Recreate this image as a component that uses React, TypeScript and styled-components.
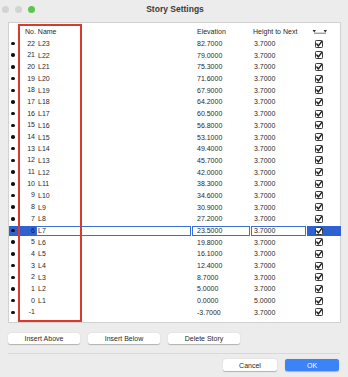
import styled, { createGlobalStyle } from "styled-components";

const GlobalStyle = createGlobalStyle`
  html, body {
    margin: 0;
    padding: 0;
    background: #ececec;
  }
  body {
    font-family: "Liberation Sans", Arial, sans-serif;
    color: #222;
  }
`;

type Story = { no: string; name: string; elevation: string; height: string };

const stories: Story[] = [
  { no: "22", name: "L23", elevation: "82.7000", height: "3.7000" },
  { no: "21", name: "L22", elevation: "79.0000", height: "3.7000" },
  { no: "20", name: "L21", elevation: "75.3000", height: "3.7000" },
  { no: "19", name: "L20", elevation: "71.6000", height: "3.7000" },
  { no: "18", name: "L19", elevation: "67.9000", height: "3.7000" },
  { no: "17", name: "L18", elevation: "64.2000", height: "3.7000" },
  { no: "16", name: "L17", elevation: "60.5000", height: "3.7000" },
  { no: "15", name: "L16", elevation: "56.8000", height: "3.7000" },
  { no: "14", name: "L15", elevation: "53.1000", height: "3.7000" },
  { no: "13", name: "L14", elevation: "49.4000", height: "3.7000" },
  { no: "12", name: "L13", elevation: "45.7000", height: "3.7000" },
  { no: "11", name: "L12", elevation: "42.0000", height: "3.7000" },
  { no: "10", name: "L11", elevation: "38.3000", height: "3.7000" },
  { no: "9", name: "L10", elevation: "34.6000", height: "3.7000" },
  { no: "8", name: "L9", elevation: "30.9000", height: "3.7000" },
  { no: "7", name: "L8", elevation: "27.2000", height: "3.7000" },
  { no: "6", name: "L7", elevation: "23.5000", height: "3.7000" },
  { no: "5", name: "L6", elevation: "19.8000", height: "3.7000" },
  { no: "4", name: "L5", elevation: "16.1000", height: "3.7000" },
  { no: "3", name: "L4", elevation: "12.4000", height: "3.7000" },
  { no: "2", name: "L3", elevation: "8.7000", height: "3.7000" },
  { no: "1", name: "L2", elevation: "5.0000", height: "3.7000" },
  { no: "0", name: "L1", elevation: "0.0000", height: "5.0000" },
  { no: "-1", name: "", elevation: "-3.7000", height: "3.7000" },
];

const SELECTED = "6";

export default function App() {
  return (
    <Window>
      <GlobalStyle />
      <TitleBar>
        <Lights>
          <Light $color="#d3d3d3" />
          <Light $color="#d3d3d3" />
          <Light $color="#5ec451" />
        </Lights>
        <Title>Story Settings</Title>
        <span />
      </TitleBar>
      <Body>
        <Table>
          <HeaderRow>
            <span />
            <HeadCell $span={2} $pad={5}>
              No. Name
            </HeadCell>
            <HeadCell $pad={5}>Elevation</HeadCell>
            <HeadCell $pad={2}>Height to Next</HeadCell>
            <HeadCell $pad={5}>
              <SortIcon />
            </HeadCell>
          </HeaderRow>
          {stories.map((s) => {
            const sel = s.no === SELECTED;
            return (
              <Row key={s.no}>
                <DotCell $sel={sel}>
                  <Dot />
                </DotCell>
                <NoCell $sel={sel}>{s.no}</NoCell>
                {sel ? (
                  <>
                    <Field $pad={1}>{s.name}</Field>
                    <Field $pad={4}>{s.elevation}</Field>
                    <Field $pad={2}>{s.height}</Field>
                  </>
                ) : (
                  <>
                    <Cell $pad={2}>{s.name}</Cell>
                    <Cell $pad={5}>{s.elevation}</Cell>
                    <Cell $pad={3}>{s.height}</Cell>
                  </>
                )}
                <CheckCell $sel={sel}>
                  <CheckBox />
                </CheckCell>
              </Row>
            );
          })}
          <Marker />
        </Table>
        <ButtonRow>
          <Button>Insert Above</Button>
          <Button>Insert Below</Button>
          <Button>Delete Story</Button>
        </ButtonRow>
        <Divider />
        <FooterRow>
          <Button>Cancel</Button>
          <Button $primary>OK</Button>
        </FooterRow>
      </Body>
    </Window>
  );
}

function CheckBox() {
  return (
    <svg width="8" height="8" viewBox="0 0 8 8">
      <rect x="0.5" y="0.5" width="7" height="7" rx="0.8" fill="#fff" stroke="#3a3a3a" strokeWidth="1" />
      <path d="M1.8 4.1 L3.4 5.9 L6.6 1.6" fill="none" stroke="#1f1f1f" strokeWidth="1.5" strokeLinecap="round" strokeLinejoin="round" />
    </svg>
  );
}

function SortIcon() {
  return (
    <svg width="16" height="5" viewBox="0 0 16 5">
      <path d="M0.5 1 L4 1 L2.25 3.6 Z" fill="#333" />
      <path d="M11.5 1 L15 1 L13.25 3.6 Z" fill="#333" />
      <path d="M2 4.2 H14" stroke="#555" strokeWidth="0.8" />
    </svg>
  );
}

const Window = styled.div`
  width: 348px;
  height: 377px;
  display: flex;
  flex-direction: column;
  background: #ececec;
  overflow: hidden;
`;

const TitleBar = styled.div`
  height: 18px;
  display: grid;
  grid-template-columns: 1fr auto 1fr;
  align-items: center;
  padding: 0 0 0 2px;
`;

const Lights = styled.div`
  display: flex;
  gap: 6px;
  align-items: center;
`;

const Light = styled.span<{ $color: string }>`
  width: 7px;
  height: 7px;
  border-radius: 50%;
  background: ${(p) => p.$color};
`;

const Title = styled.div`
  font-size: 8.5px;
  font-weight: bold;
  color: #3a3a3a;
`;

const Body = styled.div`
  padding: 4px 7px 0 8px;
  display: flex;
  flex-direction: column;
`;

const Table = styled.div`
  position: relative;
  height: 301px;
  box-sizing: border-box;
  background: #fff;
  border: 1px solid #d2d2d2;
  padding-top: 3px;
`;

const columns = "11px 16px 156px 59px 56px 1fr";

const HeaderRow = styled.div`
  display: grid;
  grid-template-columns: ${columns};
  height: 11.7px;
  align-items: center;
  font-size: 7px;
  color: #2a2a2a;
`;

const HeadCell = styled.div<{ $span?: number; $pad: number }>`
  grid-column: span ${(p) => p.$span ?? 1};
  padding-left: ${(p) => p.$pad}px;
  display: flex;
  align-items: center;
  white-space: nowrap;
`;

const Row = styled.div`
  display: grid;
  grid-template-columns: ${columns};
  height: 11.7px;
  align-items: center;
  font-size: 7px;
  color: #2a2a2a;
`;

const DotCell = styled.div<{ $sel: boolean }>`
  height: 10px;
  display: flex;
  align-items: center;
  padding-left: 2px;
  background: ${(p) => (p.$sel ? "#2e62d3" : "transparent")};
`;

const Dot = styled.span`
  width: 3.5px;
  height: 3.5px;
  border-radius: 50%;
  background: #111;
`;

const NoCell = styled.div<{ $sel: boolean }>`
  height: 10px;
  line-height: 10px;
  text-align: right;
  padding-right: 1px;
  background: ${(p) => (p.$sel ? "#2e62d3" : "transparent")};
  color: ${(p) => (p.$sel ? "#10204a" : "inherit")};
`;

const Cell = styled.div<{ $pad: number }>`
  padding-left: ${(p) => p.$pad}px;
  white-space: nowrap;
`;

const Field = styled.div<{ $pad: number }>`
  height: 10px;
  box-sizing: border-box;
  line-height: 8px;
  padding-left: ${(p) => p.$pad}px;
  border: 1px solid #3a6ed8;
  margin-right: 1px;
  background: #fff;
  white-space: nowrap;
`;

const CheckCell = styled.div<{ $sel: boolean }>`
  height: 10px;
  display: flex;
  align-items: center;
  padding-left: 8px;
  margin-right: -1px;
  background: ${(p) => (p.$sel ? "#2e62d3" : "transparent")};
`;

const Marker = styled.div`
  position: absolute;
  left: 9px;
  top: 1px;
  width: 64px;
  height: 298px;
  box-sizing: border-box;
  border: 2.5px solid #d93a2c;
  pointer-events: none;
`;

const ButtonRow = styled.div`
  display: flex;
  gap: 8px;
  margin-top: 10px;
`;

const Button = styled.button<{ $primary?: boolean }>`
  width: 72px;
  height: 11px;
  padding: 0;
  border: none;
  border-radius: 2.5px;
  font-family: "Liberation Sans", Arial, sans-serif;
  font-size: 7px;
  color: ${(p) => (p.$primary ? "#fff" : "#2a2a2a")};
  background: ${(p) => (p.$primary ? "#3b83f6" : "#fff")};
  box-shadow: 0 0.5px 1px rgba(0, 0, 0, 0.25);
`;

const Divider = styled.div`
  height: 1px;
  background: #d8d8d8;
  margin: 9px 1px 0 0;
`;

const FooterRow = styled.div`
  display: flex;
  justify-content: flex-end;
  gap: 8px;
  margin: 5px 2px 0 0;

  ${Button} {
    width: 54px;
    height: 12px;
  }
`;
